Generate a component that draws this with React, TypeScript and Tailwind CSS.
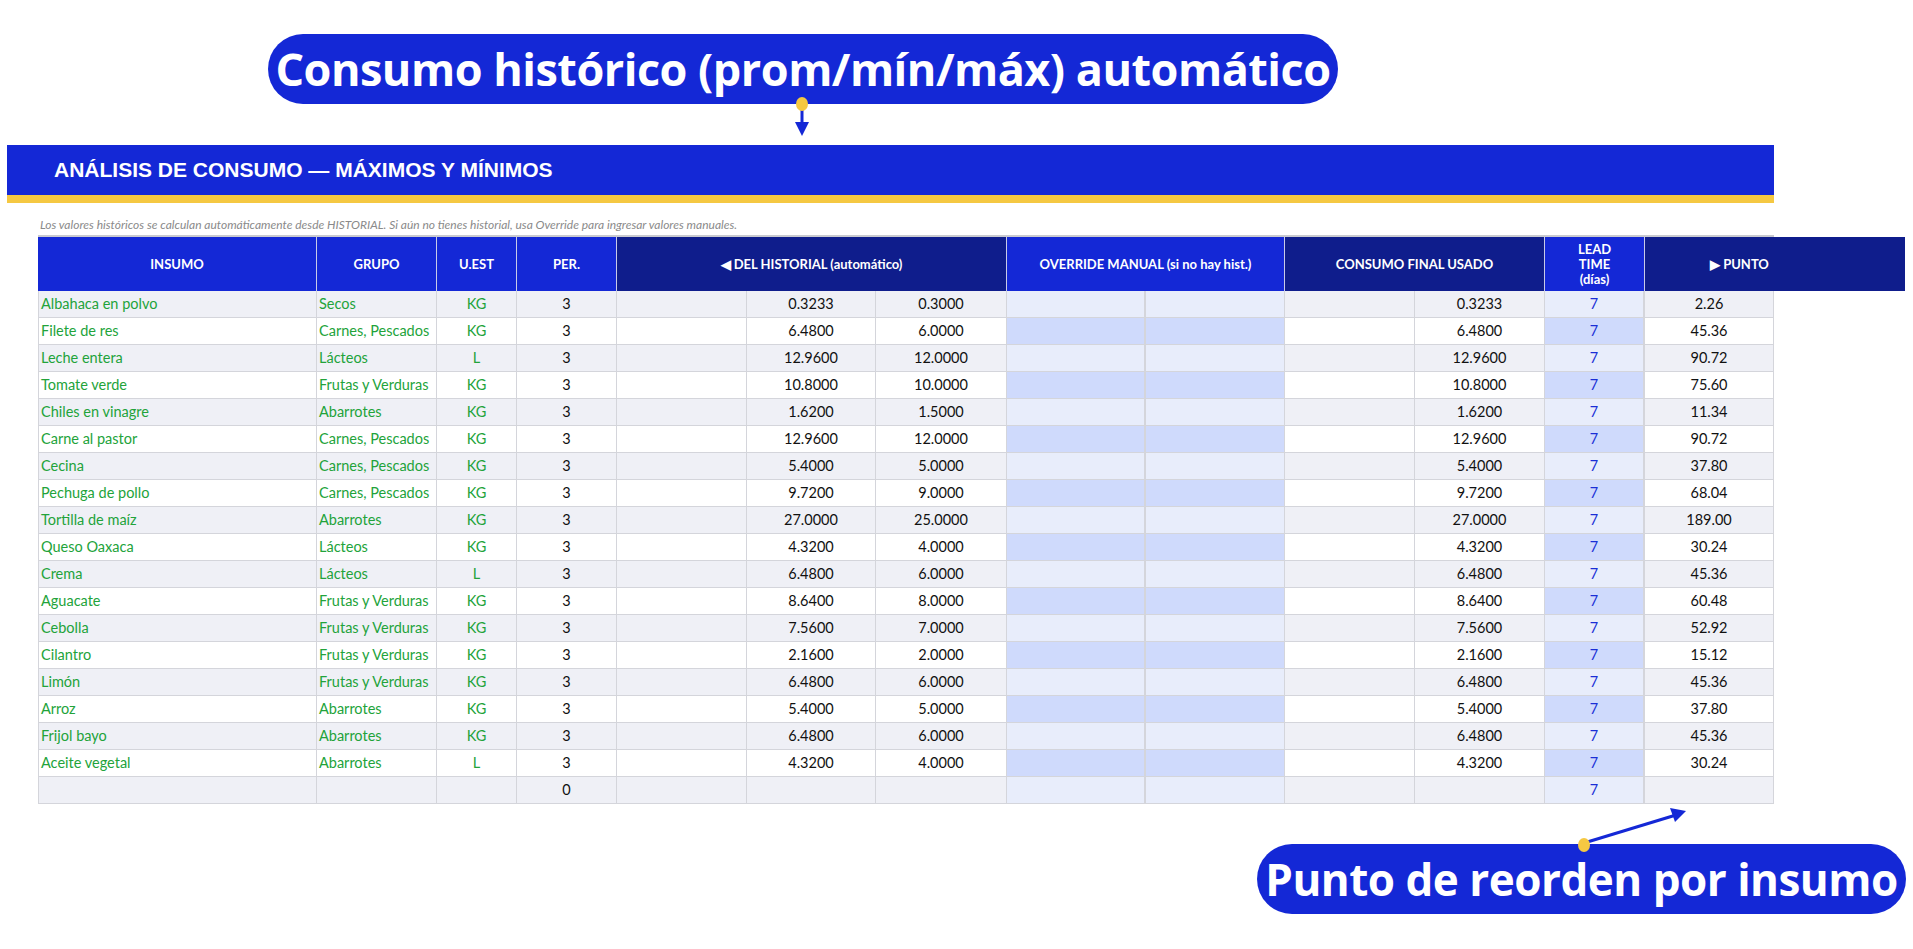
import React from "react";

type Row = [string, string, string, string, string, string];

const rows: Row[] = [
  ["Albahaca en polvo", "Secos", "KG", "0.3233", "0.3000", "2.26"],
  ["Filete de res", "Carnes, Pescados", "KG", "6.4800", "6.0000", "45.36"],
  ["Leche entera", "Lácteos", "L", "12.9600", "12.0000", "90.72"],
  ["Tomate verde", "Frutas y Verduras", "KG", "10.8000", "10.0000", "75.60"],
  ["Chiles en vinagre", "Abarrotes", "KG", "1.6200", "1.5000", "11.34"],
  ["Carne al pastor", "Carnes, Pescados", "KG", "12.9600", "12.0000", "90.72"],
  ["Cecina", "Carnes, Pescados", "KG", "5.4000", "5.0000", "37.80"],
  ["Pechuga de pollo", "Carnes, Pescados", "KG", "9.7200", "9.0000", "68.04"],
  ["Tortilla de maíz", "Abarrotes", "KG", "27.0000", "25.0000", "189.00"],
  ["Queso Oaxaca", "Lácteos", "KG", "4.3200", "4.0000", "30.24"],
  ["Crema", "Lácteos", "L", "6.4800", "6.0000", "45.36"],
  ["Aguacate", "Frutas y Verduras", "KG", "8.6400", "8.0000", "60.48"],
  ["Cebolla", "Frutas y Verduras", "KG", "7.5600", "7.0000", "52.92"],
  ["Cilantro", "Frutas y Verduras", "KG", "2.1600", "2.0000", "15.12"],
  ["Limón", "Frutas y Verduras", "KG", "6.4800", "6.0000", "45.36"],
  ["Arroz", "Abarrotes", "KG", "5.4000", "5.0000", "37.80"],
  ["Frijol bayo", "Abarrotes", "KG", "6.4800", "6.0000", "45.36"],
  ["Aceite vegetal", "Abarrotes", "L", "4.3200", "4.0000", "30.24"],
];

const cell = "h-[27px] shrink-0 border-r border-b border-[#d4d5db] flex items-center px-[2px] whitespace-nowrap overflow-hidden";

function DataRow({ r, i }: { r: Row | null; i: number }) {
  const odd = i % 2 === 0;
  const base = odd ? "bg-[#eff0f6]" : "bg-white";
  const blue = odd ? "bg-[#e8edfb]" : "bg-[#cfdafc]";
  return (
    <div className="flex text-[14.5px] text-[#111]">
      <div className={`${cell} ${base} w-[279px] border-l text-[#22a33a]`}>{r?.[0]}</div>
      <div className={`${cell} ${base} w-[120px] text-[#22a33a]`}>{r?.[1]}</div>
      <div className={`${cell} ${base} w-[80px] justify-center text-[#22a33a]`}>{r?.[2]}</div>
      <div className={`${cell} ${base} w-[100px] justify-center`}>{r ? "3" : "0"}</div>
      <div className={`${cell} ${base} w-[130px]`} />
      <div className={`${cell} ${base} w-[129px] justify-center`}>{r?.[3]}</div>
      <div className={`${cell} ${base} w-[131px] justify-center`}>{r?.[4]}</div>
      <div className={`${cell} ${blue} w-[139px] border-r-2`} />
      <div className={`${cell} ${blue} w-[139px]`} />
      <div className={`${cell} ${base} w-[130px]`} />
      <div className={`${cell} ${base} w-[130px] justify-center`}>{r?.[3]}</div>
      <div className={`${cell} ${blue} w-[100px] justify-center text-[#1a2ed6] border-r-2`}>7</div>
      <div className={`${cell} ${base} w-[129px] justify-center`}>{r?.[5]}</div>
    </div>
  );
}

const hd = "h-[54px] shrink-0 flex items-center justify-center text-white font-bold text-[13px] text-center leading-[15px] border-r border-[#c8cbe8]";

export default function App() {
  return (
    <div className="relative w-[1913px] h-[949px] bg-white overflow-hidden" style={{ fontFamily: "Lato, 'Noto Sans', sans-serif" }}>
      <div className="pt-[34px] pl-[268px]">
        <div className="w-[1070px] h-[70px] rounded-[35px] bg-[#1428d6] flex items-center justify-center text-white text-[45px] font-bold tracking-[-0.5px]" style={{ fontFamily: "'Open Sans', sans-serif" }}>
          Consumo histórico (prom/mín/máx) automático
        </div>
      </div>

      <div className="mt-[41px] ml-[7px] w-[1767px]">
        <div className="h-[50px] bg-[#1428d6] flex items-center pl-[47px] text-white text-[21px] font-bold" style={{ fontFamily: "'Liberation Sans', sans-serif" }}>
          ANÁLISIS DE CONSUMO — MÁXIMOS Y MÍNIMOS
        </div>
        <div className="h-[8px] bg-[#f5c842]" />
      </div>

      <div className="ml-[40px] mt-[14px] text-[12px] italic text-[#8a8a8a] leading-[16px]">
        Los valores históricos se calculan automáticamente desde HISTORIAL. Si aún no tienes historial, usa Override para ingresar valores manuales.
      </div>

      <div className="ml-[38px] mt-[2px] w-[1736px] border-t-2 border-[#c9cad0]">
        <div className="flex">
          <div className={`${hd} w-[279px] bg-[#1428d6]`}>INSUMO</div>
          <div className={`${hd} w-[120px] bg-[#1428d6]`}>GRUPO</div>
          <div className={`${hd} w-[80px] bg-[#1428d6]`}>U.EST</div>
          <div className={`${hd} w-[100px] bg-[#1428d6]`}>PER.</div>
          <div className={`${hd} w-[390px] bg-[#0f1d8c]`}>◀ DEL HISTORIAL (automático)</div>
          <div className={`${hd} w-[278px] bg-[#1428d6]`}>OVERRIDE MANUAL (si no hay hist.)</div>
          <div className={`${hd} w-[260px] bg-[#0f1d8c]`}>CONSUMO FINAL USADO</div>
          <div className={`${hd} w-[100px] bg-[#1428d6]`}>LEAD<br />TIME<br />(días)</div>
          <div className={`${hd} w-[260px] bg-[#0f1d8c] justify-start pl-[65px] border-r-0`}>▶ PUNTO</div>
        </div>
        {rows.map((r, i) => (
          <DataRow key={i} r={r} i={i} />
        ))}
        <DataRow r={null} i={18} />
      </div>

      <svg className="absolute left-0 top-0 pointer-events-none" width="1913" height="949">
        <line x1="802" y1="106" x2="802" y2="124" stroke="#1428d6" strokeWidth="3" />
        <polygon points="795,122 809,122 802,136" fill="#1428d6" />
        <ellipse cx="802" cy="104" rx="6" ry="7" fill="#f5c842" />
        <line x1="1584" y1="843" x2="1676" y2="815" stroke="#1428d6" strokeWidth="3" />
        <polygon points="1686,811 1670,808 1675,822" fill="#1428d6" />
      </svg>

      <div className="absolute left-[1257px] top-[844px] w-[649px] h-[70px] rounded-[35px] bg-[#1428d6] flex items-center justify-center text-white text-[44px] font-bold tracking-[-0.5px]" style={{ fontFamily: "'Open Sans', sans-serif" }}>
        Punto de reorden por insumo
      </div>
      <svg className="absolute left-0 top-0 pointer-events-none" width="1913" height="949">
        <ellipse cx="1584" cy="845" rx="6" ry="7" fill="#f5c842" />
      </svg>
    </div>
  );
}
